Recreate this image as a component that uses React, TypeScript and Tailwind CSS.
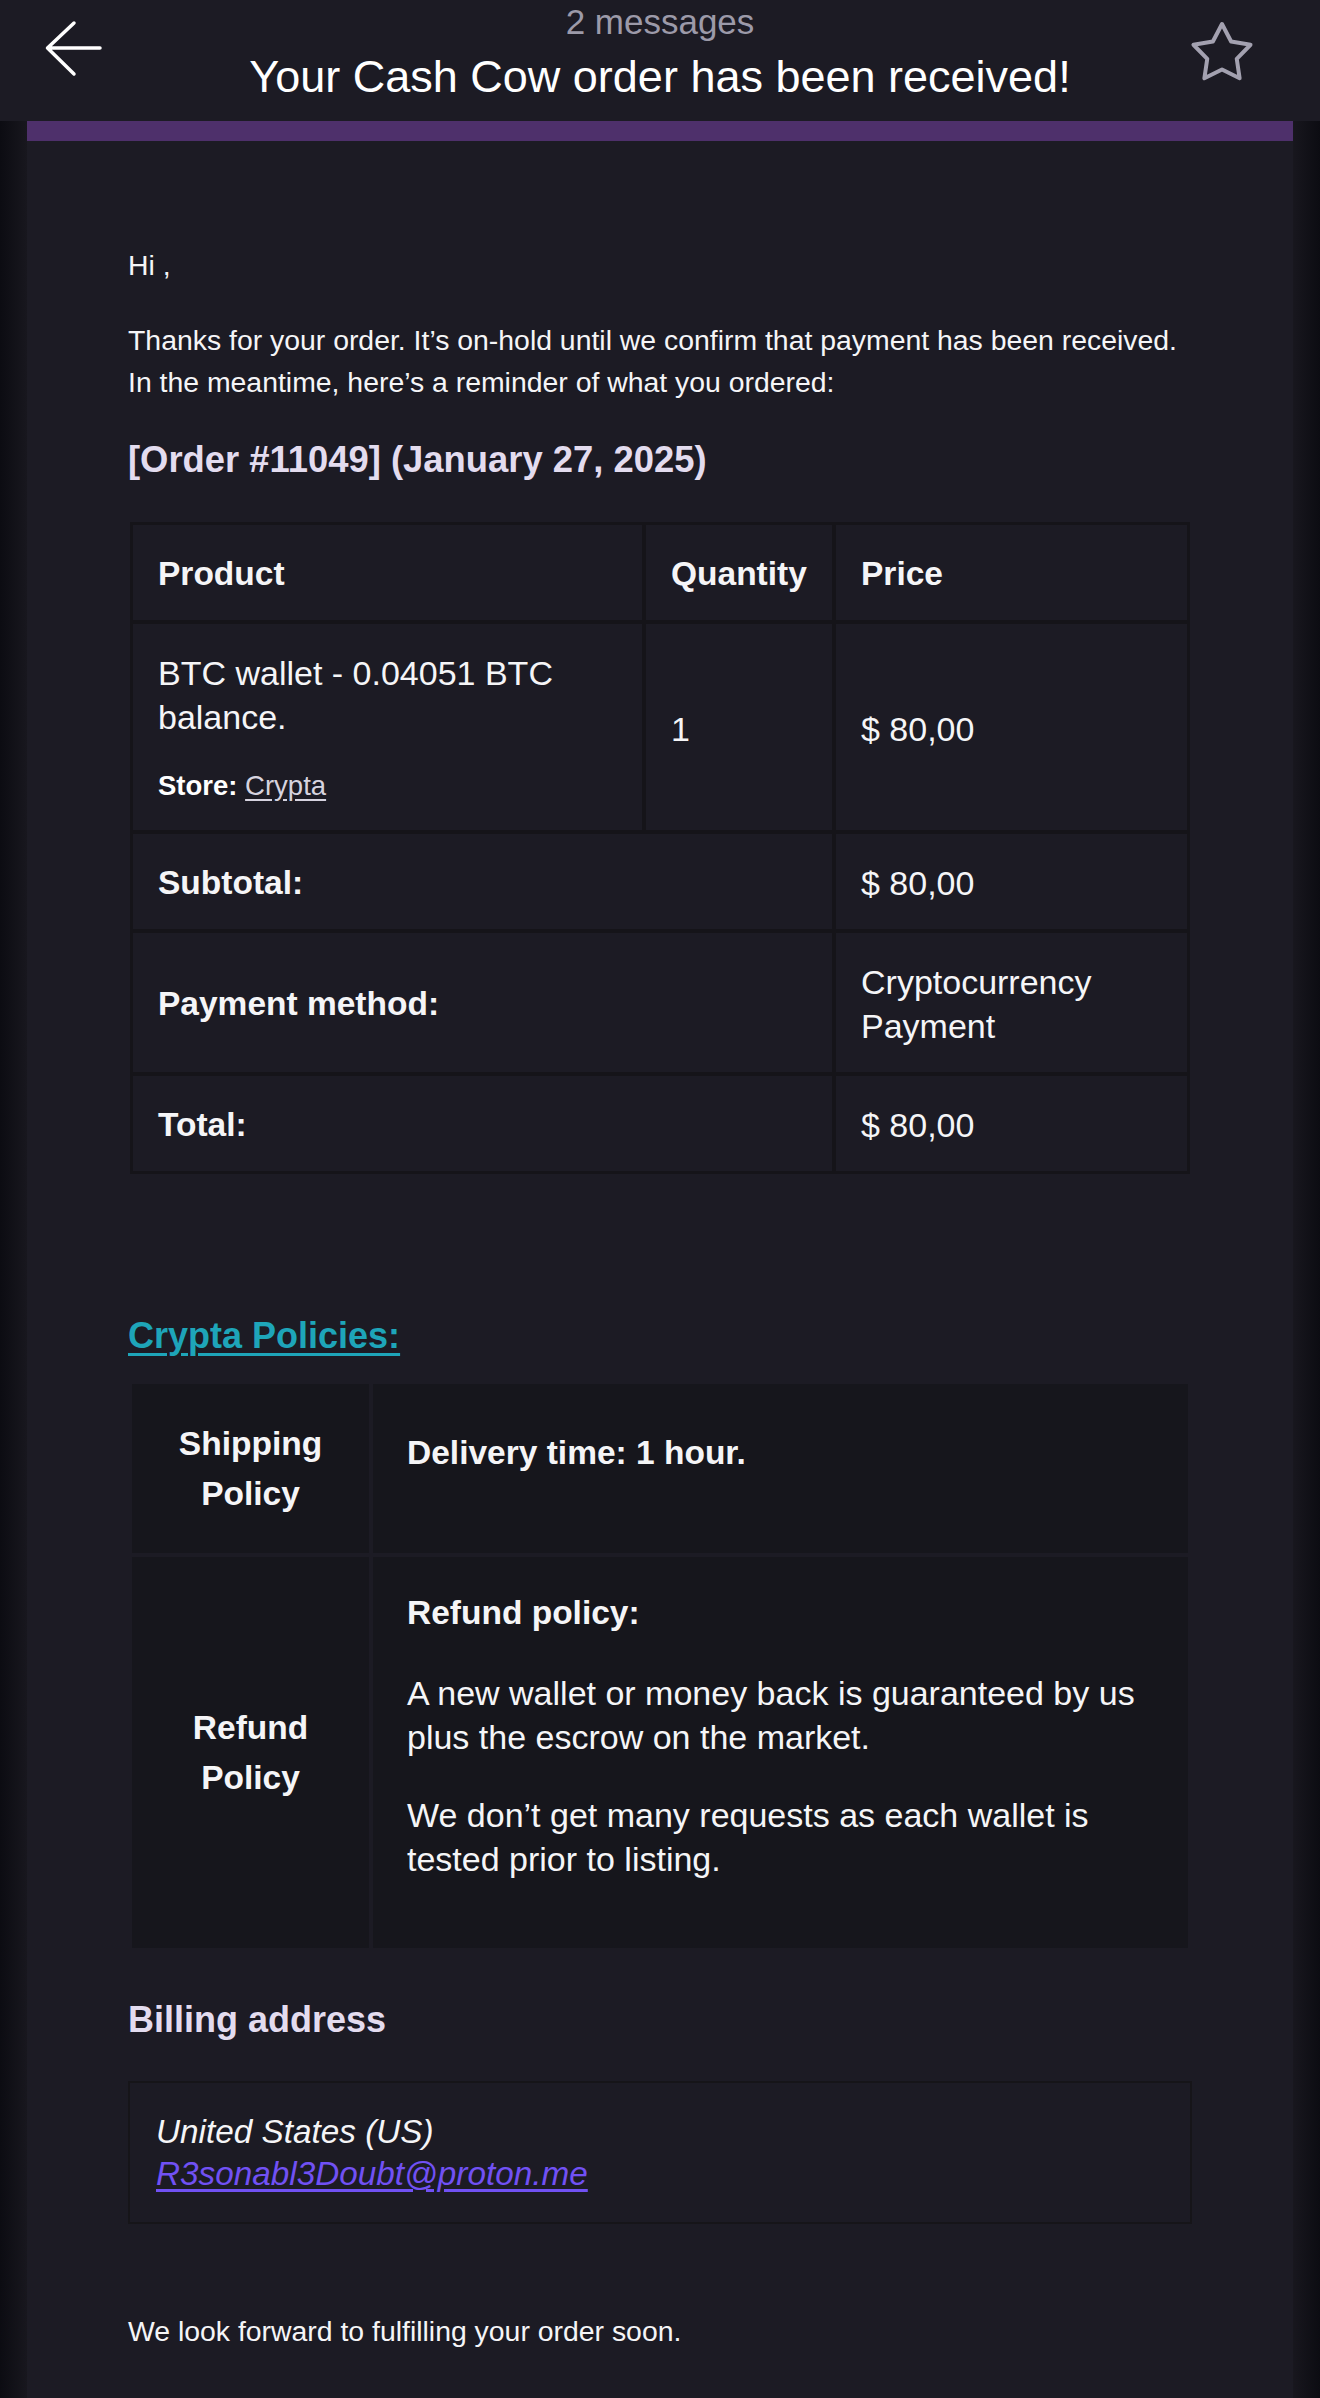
import React from "react";

const BackArrow = () => (
  <svg width="64" height="64" viewBox="0 0 64 64" fill="none" stroke="#ffffff" strokeWidth="3.5" strokeLinecap="round" strokeLinejoin="round">
    <path d="M60 32H7.5M34 7L7.5 32L34 58" />
  </svg>
);

const StarIcon = () => (
  <svg width="72" height="72" viewBox="-36 -36 72 72" fill="none" stroke="#a3a1b0" strokeWidth="4" strokeLinejoin="round">
    <polygon points="0,-30 9.11,-12.54 28.53,-9.27 14.74,4.79 17.63,24.27 0,15.5 -17.63,24.27 -14.74,4.79 -28.53,-9.27 -9.11,-12.54" />
  </svg>
);

const cell = "bg-[#1c1b24] px-[25px] pt-[27px] pb-[24px] flex items-center";
const bold = " font-bold text-[33.5px]";
const policyCell = "bg-[#16161c]";

const App: React.FC = () => {
  return (
    <div className="min-h-[2398px] bg-[#1c1b24] font-['Liberation_Sans',Arial,sans-serif] text-[#f5f5f7]">
      {/* top bar */}
      <header className="grid h-[121px] grid-cols-[1fr_auto_1fr] bg-[#1c1b24]">
        <div className="pl-[40px] pt-[16px]">
          <BackArrow />
        </div>
        <div className="flex flex-col items-center pt-[4px]">
          <div className="text-[35px] leading-[36px] text-[#9c9aa9]">2 messages</div>
          <div className="mt-[11px] text-[45px] leading-[52px] text-white">Your Cash Cow order has been received!</div>
        </div>
        <div className="flex justify-end pr-[62px] pt-[18px]">
          <StarIcon />
        </div>
      </header>

      <div className="flex min-h-[2277px]">
        <div className="w-[27px] bg-linear-to-r from-[#0c0c12] to-[#18171e]" />
        <main className="flex-1 bg-[#1c1b24]">
          <div className="h-[20px] bg-[#4e306b]" />
          <div className="px-[101px] pt-[103px] pb-[47px]">
            <p className="text-[28.4px] leading-[42px]">Hi ,</p>
            <p className="mt-[33px] text-[28.4px] leading-[42px]">
              Thanks for your order. It’s on-hold until we confirm that payment has been received.
              <br />
              In the meantime, here’s a reminder of what you ordered:
            </p>

            <h2 className="mt-[35px] text-[36.4px] font-bold leading-[44px] text-[#e3dcef]">
              [Order #11049] (January 27, 2025)
            </h2>

            <div className="mx-[2px] mt-[40px] grid grid-cols-[509px_186px_1fr] gap-[4px] bg-[#151419] p-[3px] text-[34px] leading-[44px]">
              <div className={cell + bold}>Product</div>
              <div className={cell + bold}>Quantity</div>
              <div className={cell + bold}>Price</div>

              <div className="flex flex-col justify-center bg-[#1c1b24] px-[25px] pt-[27px] pb-[24px]">
                <div>BTC wallet - 0.04051 BTC balance.</div>
                <div className="mt-[27px] text-[27.5px] leading-[40px] text-[#e4e2ea]">
                  <span className="font-bold text-white">Store:</span>{" "}
                  <a className="text-[#d6d3df] underline underline-offset-4">Crypta</a>
                </div>
              </div>
              <div className={cell}>1</div>
              <div className={cell}>$ 80,00</div>

              <div className={cell + bold + " col-span-2"}>Subtotal:</div>
              <div className={cell}>$ 80,00</div>

              <div className={cell + bold + " col-span-2"}>Payment method:</div>
              <div className={cell}>Cryptocurrency Payment</div>

              <div className={cell + bold + " col-span-2"}>Total:</div>
              <div className={cell}>$ 80,00</div>
            </div>

            <h2 className="mt-[140px] text-[36px] font-bold leading-[44px] text-[#1ea5b9] underline decoration-[3px] underline-offset-[5px]">
              Crypta Policies:
            </h2>

            <div className="mx-[4px] mt-[26px] grid grid-cols-[237px_1fr] gap-[4px] text-[34px] leading-[44px]">
              <div className={policyCell + " flex items-center justify-center px-[20px] text-center text-[33.5px] font-bold leading-[50px]"}>
                Shipping Policy
              </div>
              <div className={policyCell + " pl-[34px] pr-[34px] pt-[47px] pb-[78px] text-[33.5px] font-bold"}>
                Delivery time: 1 hour.
              </div>

              <div className={policyCell + " flex items-center justify-center px-[20px] text-center text-[33.5px] font-bold leading-[50px]"}>
                Refund Policy
              </div>
              <div className={policyCell + " flex flex-col pl-[34px] pr-[34px] pt-[34px] pb-[67px]"}>
                <p className="text-[33.5px] font-bold">Refund policy:</p>
                <p className="mt-[36px]">A new wallet or money back is guaranteed by us plus the escrow on the market.</p>
                <p className="mt-[34px]">We don’t get many requests as each wallet is tested prior to listing.</p>
              </div>
            </div>

            <h2 className="mt-[50px] text-[36px] font-bold leading-[44px] text-[#e3dcef]">Billing address</h2>

            <div className="mt-[39px] border-2 border-[#161519] px-[26px] pt-[28px] pb-[27px] text-[33.3px] italic leading-[42px]">
              <div>United States (US)</div>
              <a className="text-[#7151f4] underline underline-offset-4">R3sonabl3Doubt@proton.me</a>
            </div>

            <p className="mt-[86px] text-[28.4px] leading-[42px]">We look forward to fulfilling your order soon.</p>
          </div>
        </main>
        <div className="w-[27px] bg-linear-to-l from-[#0c0c12] to-[#18171e]" />
      </div>
    </div>
  );
};

export default App;
